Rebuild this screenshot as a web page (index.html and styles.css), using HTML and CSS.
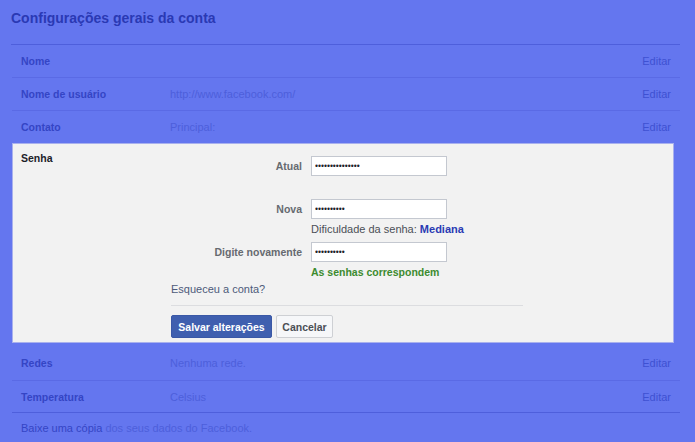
FILE: index.html
```html
<!DOCTYPE html>
<html lang="pt-BR">
<head>
<meta charset="utf-8">
<title>Configurações gerais da conta</title>
<link rel="stylesheet" href="styles.css">
</head>
<body>
<div class="page">
  <h1 class="title">Configurações gerais da conta</h1>

  <div class="row">
    <div class="row-label">Nome</div>
    <div class="row-value"></div>
    <a class="row-edit">Editar</a>
  </div>
  <div class="row">
    <div class="row-label">Nome de usuário</div>
    <div class="row-value">http://www.facebook.com/</div>
    <a class="row-edit">Editar</a>
  </div>
  <div class="row row-last">
    <div class="row-label">Contato</div>
    <div class="row-value">Principal:</div>
    <a class="row-edit">Editar</a>
  </div>

  <div class="panel">
    <div class="panel-title">Senha</div>
    <div class="form">
      <div class="field field-first">
        <label class="field-label">Atual</label>
        <input class="field-input" type="password" value="abcdefghijklmno">
      </div>
      <div class="field field-spaced">
        <label class="field-label">Nova</label>
        <input class="field-input" type="password" value="abcdefghij">
      </div>
      <div class="hint">Dificuldade da senha: <span class="strength">Mediana</span></div>
      <div class="field">
        <label class="field-label">Digite novamente</label>
        <input class="field-input" type="password" value="abcdefghij">
      </div>
      <div class="match">As senhas correspondem</div>
      <a class="forgot">Esqueceu a conta?</a>
      <div class="actions">
        <button class="btn btn-primary" type="button">Salvar alterações</button>
        <button class="btn btn-secondary" type="button">Cancelar</button>
      </div>
    </div>
  </div>

  <div class="row row-after-panel">
    <div class="row-label">Redes</div>
    <div class="row-value">Nenhuma rede.</div>
    <a class="row-edit">Editar</a>
  </div>
  <div class="row row-strong">
    <div class="row-label">Temperatura</div>
    <div class="row-value">Celsius</div>
    <a class="row-edit">Editar</a>
  </div>

  <p class="download"><a class="download-link">Baixe uma cópia</a> dos seus dados do Facebook.</p>
</div>
</body>
</html>
```

FILE: styles.css
```css
html, body {
  margin: 0;
  padding: 0;
}

body {
  background: #6476ef;
  font-family: "Liberation Sans", Arial, sans-serif;
  width: 695px;
  height: 442px;
  overflow: hidden;
}

.page {
  padding: 0 15px 0 12px;
}

.title {
  margin: 0 0 0 -1px;
  padding: 9px 0 17px 0;
  font-size: 14px;
  line-height: 18px;
  font-weight: bold;
  color: #2a39b4;
  border-bottom: 1px solid #4e5fdc;
}

.row {
  display: grid;
  grid-template-columns: 149px 1fr auto;
  align-items: center;
  height: 32px;
  padding: 0 9px;
  border-bottom: 1px solid #5a6ae5;
}

.row-last {
  border-bottom: none;
}

.row-after-panel {
  box-sizing: border-box;
  height: 38px;
  padding-top: 3px;
}

.row-strong {
  height: 31px;
  border-bottom: 1px solid #4e5fdc;
}

.row-label {
  font-size: 10.5px;
  font-weight: bold;
  color: #3445c5;
}

.row-value {
  font-size: 11px;
  color: #4d5fdb;
}

.row-edit {
  font-size: 11px;
  color: #3e51d2;
}

.panel {
  width: 660px;
  height: 198px;
  background: #f2f2f2;
  border: 1px solid #a9b1ee;
  display: grid;
  grid-template-columns: 158px 1fr;
}

.panel-title {
  padding: 8px 0 0 8px;
  font-size: 10.5px;
  font-weight: bold;
  line-height: 12px;
  color: #1d2129;
}

.form {
  display: flex;
  flex-direction: column;
  align-items: flex-start;
  width: 352px;
}

.field {
  display: flex;
  align-items: center;
  height: 20px;
}

.field-first {
  margin-top: 12px;
}

.field-spaced {
  margin-top: 23px;
}

.field-label {
  width: 131px;
  margin-right: 9px;
  text-align: right;
  font-size: 10.5px;
  font-weight: bold;
  color: #666a70;
}

.field-input {
  box-sizing: border-box;
  width: 136px;
  height: 20px;
  margin: 0;
  padding: 0 3px;
  border: 1px solid #c4c8d0;
  background: #fff;
  font-family: "Liberation Sans", Arial, sans-serif;
  font-size: 8.5px;
  color: #1d2129;
  outline: none;
}

.hint {
  margin: 3px 0 6px 140px;
  font-size: 11px;
  line-height: 14px;
  color: #4b4f56;
}

.strength {
  font-weight: bold;
  color: #2a3bb4;
}

.match {
  margin: 3px 0 3px 140px;
  font-size: 10.5px;
  line-height: 14px;
  font-weight: bold;
  color: #3c8b2f;
}

.forgot {
  font-size: 11px;
  line-height: 14px;
  color: #4d5a7a;
}

.actions {
  align-self: stretch;
  margin-top: 9px;
  padding-top: 9px;
  border-top: 1px solid #dcdde0;
  display: flex;
  gap: 4px;
}

.btn {
  box-sizing: border-box;
  height: 23px;
  margin: 0;
  padding: 0 5px;
  font-family: "Liberation Sans", Arial, sans-serif;
  font-size: 10.5px;
  font-weight: bold;
  border-radius: 2px;
}

.btn-primary {
  width: 101px;
  background: #3f5faf;
  border: 1px solid #3a58a6;
  color: #fff;
}

.btn-secondary {
  width: 57px;
  background: #f6f7f9;
  border: 1px solid #ced0d4;
  color: #4b4f56;
}

.download {
  margin: 0;
  padding: 9px 9px 0;
  font-size: 11px;
  color: #4d5fdb;
}

.download-link {
  color: #3445c5;
}
```
